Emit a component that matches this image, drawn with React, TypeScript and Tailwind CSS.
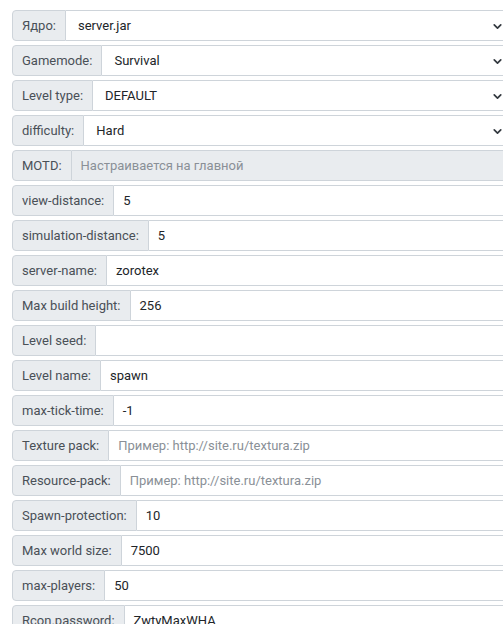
import { ChevronDown } from "lucide-react";

type Field = {
  label: string;
  kind: "select" | "input" | "disabled";
  value?: string;
  placeholder?: string;
};

const fields: Field[] = [
  { label: "Ядро:", kind: "select", value: "server.jar" },
  { label: "Gamemode:", kind: "select", value: "Survival" },
  { label: "Level type:", kind: "select", value: "DEFAULT" },
  { label: "difficulty:", kind: "select", value: "Hard" },
  { label: "MOTD:", kind: "disabled", placeholder: "Настраивается на главной" },
  { label: "view-distance:", kind: "input", value: "5" },
  { label: "simulation-distance:", kind: "input", value: "5" },
  { label: "server-name:", kind: "input", value: "zorotex" },
  { label: "Max build height:", kind: "input", value: "256" },
  { label: "Level seed:", kind: "input", value: "" },
  { label: "Level name:", kind: "input", value: "spawn" },
  { label: "max-tick-time:", kind: "input", value: "-1" },
  { label: "Texture pack:", kind: "input", placeholder: "Пример: http://site.ru/textura.zip" },
  { label: "Resource-pack:", kind: "input", placeholder: "Пример: http://site.ru/textura.zip" },
  { label: "Spawn-protection:", kind: "input", value: "10" },
  { label: "Max world size:", kind: "input", value: "7500" },
  { label: "max-players:", kind: "input", value: "50" },
  { label: "Rcon.password:", kind: "input", value: "ZwtyMaxWHA" },
];

function Row({ f }: { f: Field }) {
  return (
    <div className="flex h-[31px] w-[506px] shrink-0">
      <span className="flex items-center whitespace-nowrap rounded-l-[4px] border border-[#ced4da] bg-[#e9ecef] px-[9px] pt-px text-[#495057]">
        {f.label}
      </span>
      {f.kind === "select" ? (
        <div className="relative flex flex-1 items-center border border-l-0 border-[#ced4da] bg-white pl-3 pt-px text-[#212529]">
          {f.value}
          <ChevronDown size={13} strokeWidth={3.2} className="absolute right-[13px] text-[#343a40]" />
        </div>
      ) : (
        <div
          className={
            "flex flex-1 items-center border border-l-0 border-[#ced4da] pl-[9px] pt-px " +
            (f.kind === "disabled" ? "bg-[#e9ecef]" : "bg-white")
          }
        >
          {f.value ? (
            <span className="text-[#212529]">{f.value}</span>
          ) : (
            <span className="text-[#8a9097]">{f.placeholder}</span>
          )}
        </div>
      )}
    </div>
  );
}

export default function App() {
  return (
    <div
      className="h-[624px] w-[503px] overflow-hidden bg-white text-[13px]"
      style={{ fontFamily: "Roboto, 'Noto Sans', sans-serif" }}
    >
      <div className="flex flex-col gap-1 pl-3 pt-[10px]">
        {fields.map((f) => (
          <Row key={f.label} f={f} />
        ))}
      </div>
    </div>
  );
}
